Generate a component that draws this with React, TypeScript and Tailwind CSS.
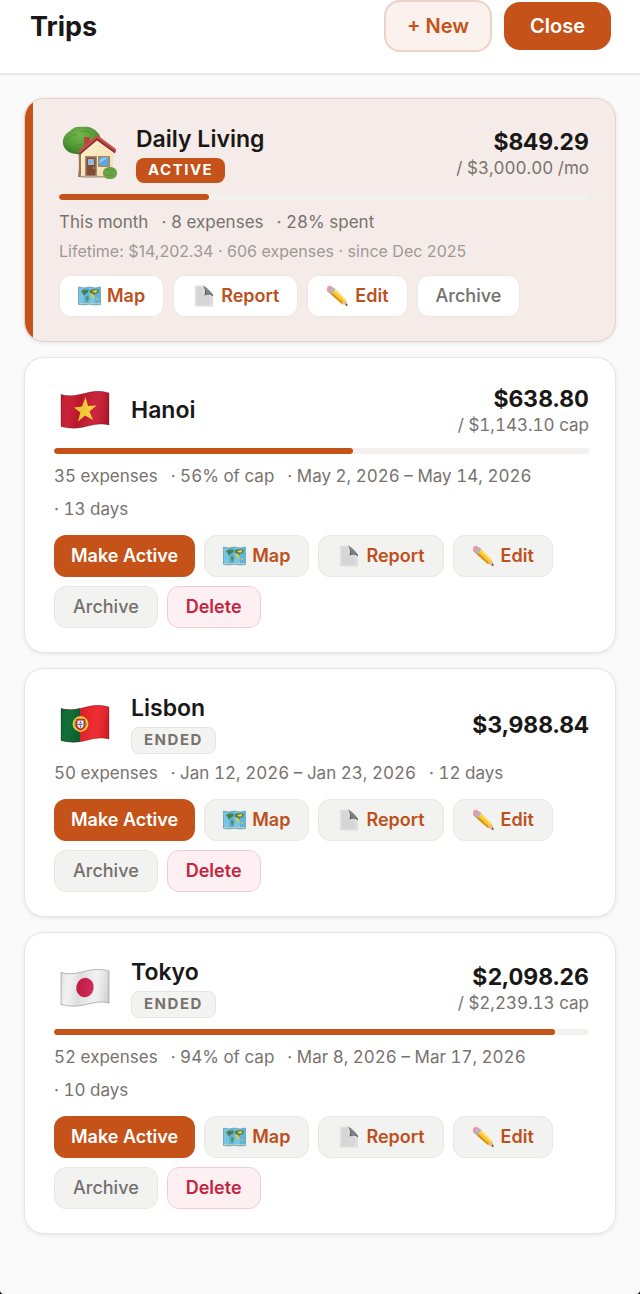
import React from "react";

type Trip = {
  name: string;
  icon: React.ReactNode;
  status?: "ACTIVE" | "ENDED";
  amount: string;
  limit?: string;
  progress?: number;
  meta: string[];
  lifetime?: string;
};

function House() {
  return (
    <svg viewBox="0 0 56 56" className="h-14 w-14" aria-hidden="true">
      <defs>
        <radialGradient id="leaf" cx="45%" cy="30%" r="70%">
          <stop offset="0" stopColor="#74b54a" />
          <stop offset="0.6" stopColor="#559a38" />
          <stop offset="1" stopColor="#3a7a2a" />
        </radialGradient>
        <linearGradient id="wall" x1="0" y1="0" x2="1" y2="1">
          <stop offset="0" stopColor="#fff0cb" />
          <stop offset="1" stopColor="#f3dcae" />
        </linearGradient>
      </defs>
      <path d="M16 24h6l-1 28h-5c1.500-10 1-19 0-28z" fill="#9a7654" />
      <path d="M1 19C0 13 4 8 8 6c3-4 8-5 12-4 6-1 12 1 15 5 4 3 5 9 1 13-3 3-6 4-9 5-3 4-8 5-12 4-7 0-13-4-14-10z" fill="url(#leaf)" />
      <path d="M6 14c3-4 7-5 10-4M12 22c4-3 9-3 12 0M20 7c4-2 8 0 10 3M5 21c2 2 4 3 6 2" fill="none" stroke="#3f7a2c" strokeWidth="1" opacity=".45" />
      <path d="M22 12h6v10h-6z" fill="#b8443a" />
      <path d="M19 29 35 14l16 14v24H19z" fill="url(#wall)" />
      <path d="M19 51h32v1.500H19z" fill="#ad9c81" />
      <path d="M17 27 35 11l19 14-1 3.500-18-13-17 14z" fill="#8f2d30" />
      <path d="m16 26.500 19-16.500 19 14-1 2L35 13 18 28z" fill="#c9504a" />
      <path d="M23 31h12v20H23z" fill="#a98a68" />
      <path d="M24.500 32.500h9V51h-9z" fill="#854a36" />
      <path d="M26 34h6v6h-6z" fill="#8ebbe0" />
      <circle cx="31.800" cy="43" r=".8" fill="#e7c26d" />
      <path d="M22 50.500h14v2H22z" fill="#b6aa9a" />
      <path d="M36 31h12v11H36z" fill="#a38a6d" />
      <path d="M37.500 32.500h9v8h-9z" fill="#58a9de" />
      <path d="M37.500 35.500 41 32.500h5l-8.500 6z" fill="#8dcaee" />
      <path d="M41 48c0-4 3-6 7-6s7 2 7 6-3 6-7 6-7-2-7-6z" fill="#68a344" />
      <path d="M44 46c2-2 5-2 7 0M44 50c2 1 5 1 7-1" fill="none" stroke="#477e2d" opacity=".4" />
    </svg>
  );
}

type FlagKind = "vietnam" | "portugal" | "japan";

function Flag({ kind }: { kind: FlagKind }) {
  const outline = "M1 3.500C11 6 18 4 26 2S41-.5 49 2v32c-8-2-15-.5-23 1.500S11 38 1 35.500z";
  return (
    <svg viewBox="0 0 50 38" className="h-[38px] w-[50px]" aria-hidden="true">
      <defs>
        <clipPath id={kind + "-shape"}>
          <path d={outline} />
        </clipPath>
        <linearGradient id={kind + "-fold"} x1="0" x2="1" y1="0" y2=".1">
          <stop offset="0" stopColor="#000" stopOpacity=".12" />
          <stop offset=".2" stopColor="#fff" stopOpacity=".04" />
          <stop offset=".42" stopColor="#000" stopOpacity=".08" />
          <stop offset=".75" stopColor="#fff" stopOpacity=".06" />
          <stop offset="1" stopColor="#000" stopOpacity=".12" />
        </linearGradient>
      </defs>
      <g clipPath={"url(#" + kind + "-shape)"}>
        {kind === "vietnam" && (
          <>
            <path d="M0 0h50v38H0z" fill="#c8182f" />
            <path d="m25.500 6 2.500 9 8.500-.5-7 6 3.500 8.500-8-4.500-7 6 2.300-9-6.300-5 8-1z" fill="#ffd238" />
          </>
        )}
        {kind === "portugal" && (
          <>
            <path d="M0 0h50v38H0z" fill="#ed2028" />
            <path d="M0 0h20v38H0z" fill="#08672f" />
            <circle cx="20.500" cy="19" r="7" fill="#8c8a2c" stroke="#f4d238" strokeWidth="1.800" />
            <path d="M14 16c4-3 9-3 13 0M14 22c4 3 9 3 13 0M20.500 11v16" stroke="#f4d238" strokeWidth="1" fill="none" />
            <path d="M16 14h9v6.500c0 3-2 4-4.500 5-2.500-1-4.500-2-4.500-5z" fill="#d92737" />
            <path d="M17.500 15.500h6v4.500c0 2-1 2.700-3 3.500-2-.8-3-1.500-3-3.500z" fill="#fff" />
            <path d="M20.500 16.500v6M18.500 19.300h4" stroke="#3158a8" strokeWidth="1.300" strokeDasharray="1.500 .7" />
          </>
        )}
        {kind === "japan" && (
          <>
            <path d="M0 0h50v38H0z" fill="#f0f0f1" />
            <ellipse cx="25" cy="18.500" rx="8.700" ry="9.700" transform="rotate(12 25 18.500)" fill="#cf1f4d" />
          </>
        )}
        <path d="M0 0h50v38H0z" fill={"url(#" + kind + "-fold)"} />
      </g>
      <path d={outline} fill="none" stroke="#000" strokeOpacity=".25" strokeWidth="1" />
    </svg>
  );
}

function MapIcon() {
  return (
    <svg viewBox="0 0 23 20" className="h-5 w-[23px]" aria-hidden="true">
      <path d="M.5 1 6 2l5.500-1L17 2l5.500-1v17.500L17 19l-5.500-.8L6 19l-5.500-.7z" fill="#5bb5dd" />
      <path d="M.5 1 6 2v17l-5.500-.7zM11.500 1 17 2v17l-5.500-.8z" fill="#8bd1eb" opacity=".6" />
      <path d="m3 5 3-1.500 5 .5-1.500 3L7 8l-.5 2L5 8z" fill="#4d7a4a" />
      <path d="m8 10 3 1-.5 2.500L9 16l-1-3z" fill="#5e8f4a" />
      <path d="m12 4 4-1 5 1-1 3-3 1-1 2-1-2-3-1z" fill="#557b3c" />
      <path d="m11.500 8 3-.5 2 2.500-1.500 3-1.500-3z" fill="#dcc64a" />
      <path d="m14 5 4-1 1.500 1.500L17 7z" fill="#f1cf45" />
      <path d="M18 12h2.500v1.500H18z" fill="#cdbb52" />
      <path d="M1 17.500 6 18l5.500-.8L17 18l5-.5" stroke="#d7d3b4" strokeWidth="1" fill="none" />
      <path d="M.5 1 6 2l5.500-1L17 2l5.500-1v17.500L17 19l-5.500-.8L6 19l-5.500-.7z" fill="none" stroke="#628c9b" strokeWidth=".6" />
    </svg>
  );
}

function ReportIcon() {
  return (
    <svg viewBox="0 0 23 22" className="h-[22px] w-[23px]" aria-hidden="true">
      <path d="M3 .5h8l10 10v11H3z" fill="#dedede" />
      <path d="M5 3h6M5 5h6M5 7h6M5 9h6M5 11h12M5 13h13M5 15h13M5 17h13M5 19h12" stroke="#c3c3c3" strokeWidth=".6" />
      <path d="M11 .5c2 2 2.500 6 1.500 10 3-1.500 6-1.500 8.500 1v-1.500z" fill="#4b5053" />
      <path d="M11 .5c4 2 8 6 10 9.500-3-1.500-5-1.500-7.500 0 .5-3 0-6.500-2.500-9.500z" fill="#7b8083" />
    </svg>
  );
}

function PencilIcon() {
  return (
    <svg viewBox="0 0 23 22" className="h-[22px] w-[23px]" aria-hidden="true">
      <path d="M1 3.500C1 1.500 3 .5 5 1l2.500 2-4.500 5-2-2z" fill="#e59aaa" />
      <path d="m3 7.500 4.500-5 2 2L5 9.500z" fill="#8d9da5" />
      <path d="m4 6.500 3.500-3M5 8l3.500-4" stroke="#d6e0e2" strokeWidth=".7" />
      <path d="m5 9.500 4.500-5L20 15l-4 4z" fill="#f8c52c" />
      <path d="m6.500 8 10.700 10L16 19 5 9.500z" fill="#d88b17" />
      <path d="m8 5.500 11 10.500 1-1L9.500 4.500z" fill="#ffe16a" />
      <path d="m16 19 4-4 1.500 6z" fill="#e7b889" />
      <path d="m19.500 20.200 1.500-2 .5 2.800z" fill="#373331" />
    </svg>
  );
}

const trips: Trip[] = [
  {
    name: "Daily Living",
    icon: <House />,
    status: "ACTIVE",
    amount: "$849.29",
    limit: "/ $3,000.00 /mo",
    progress: 28.3,
    meta: ["This month", "· 8 expenses", "· 28% spent"],
    lifetime: "Lifetime: $14,202.34 · 606 expenses · since Dec 2025",
  },
  {
    name: "Hanoi",
    icon: <Flag kind="vietnam" />,
    amount: "$638.80",
    limit: "/ $1,143.10 cap",
    progress: 55.9,
    meta: ["35 expenses", "· 56% of cap", "· May 2, 2026 – May 14, 2026", "· 13 days"],
  },
  {
    name: "Lisbon",
    icon: <Flag kind="portugal" />,
    status: "ENDED",
    amount: "$3,988.84",
    meta: ["50 expenses", "· Jan 12, 2026 – Jan 23, 2026", "· 12 days"],
  },
  {
    name: "Tokyo",
    icon: <Flag kind="japan" />,
    status: "ENDED",
    amount: "$2,098.26",
    limit: "/ $2,239.13 cap",
    progress: 93.7,
    meta: ["52 expenses", "· 94% of cap", "· Mar 8, 2026 – Mar 17, 2026", "· 10 days"],
  },
];

function TripCard({ trip }: { trip: Trip }) {
  const active = trip.status === "ACTIVE";
  const action =
    "flex h-[42px] items-center gap-1.5 rounded-xl border px-[18px] text-lg whitespace-nowrap " +
    (active ? "border-[#ece7e4] bg-white" : "border-[#e7e7e5] bg-[#f2f2f0]");
  return (
    <article
      className={
        "flex overflow-hidden rounded-[20px] border shadow-[0_1px_4px_rgba(0,0,0,0.09)] " +
        (active ? "border-[#e9cfc5] bg-[#f5ece9]" : "border-[#e6e6e6] bg-white")
      }
    >
      {active && <div className="w-2 shrink-0 bg-[#c55218]" />}
      <div className={"min-w-0 flex-1 py-6 pr-[26px] " + (active ? "pl-[26px]" : "pl-[29px]")}>
        <div className="flex items-center">
          <div className={"flex w-[62px] shrink-0 items-center justify-center " + (active ? "h-[60px]" : "h-[55px]")}>
            {trip.icon}
          </div>
          <div className="ml-[15px] flex min-w-0 flex-1 flex-col items-start gap-1">
            <h2 className="text-[23px] leading-[30px] font-semibold text-[#1a1816]">{trip.name}</h2>
            {active && (
              <span className="flex h-[25px] items-center rounded-lg bg-[#c55218] px-3 text-[15px] font-bold tracking-widest text-white">
                ACTIVE
              </span>
            )}
            {trip.status === "ENDED" && (
              <span className="flex h-[27px] items-center rounded-lg border border-[#e5e5e2] bg-[#f3f3f1] px-3 text-[15px] font-bold tracking-widest text-[#77736e]">
                ENDED
              </span>
            )}
          </div>
          <div className="shrink-0 pt-0.5 text-right tabular-nums">
            <div className="text-[23px] leading-7 font-bold text-[#1a1816]">{trip.amount}</div>
            {trip.limit && <div className="text-[17px] leading-6 text-[#77726e]">{trip.limit}</div>}
          </div>
        </div>
        {trip.progress !== undefined && (
          <div
            role="progressbar"
            aria-label={trip.name + " budget"}
            aria-valuenow={Math.round(trip.progress)}
            aria-valuemin={0}
            aria-valuemax={100}
            className="mt-[11px] h-1.5 overflow-hidden rounded-full bg-[#f2f1ef]"
          >
            <div className="h-full rounded-full bg-[#c55218]" style={{ width: trip.progress + "%" }} />
          </div>
        )}
        <div
          className={
            "flex flex-wrap gap-x-[13px] gap-y-2 text-[17px] leading-[25px] text-[#77726e] tabular-nums " +
            (trip.progress === undefined ? "mt-[7px]" : "mt-2.5")
          }
        >
          {trip.meta.map((item) => (
            <span key={item}>{item}</span>
          ))}
        </div>
        {trip.lifetime && <p className="mt-[5px] text-base leading-[22px] text-[#9f9895]">{trip.lifetime}</p>}
        <div className="mt-[13px] flex flex-wrap gap-[9px]">
          {!active && (
            <button type="button" className="h-[42px] rounded-xl bg-[#c55218] px-[17px] text-lg font-semibold text-white">
              Make Active
            </button>
          )}
          <button type="button" className={action + " font-semibold text-[#bd501c]"}>
            <MapIcon />
            Map
          </button>
          <button type="button" className={action + " font-semibold text-[#bd501c]"}>
            <ReportIcon />
            Report
          </button>
          <button type="button" className={action + " font-semibold text-[#bd501c]"}>
            <PencilIcon />
            Edit
          </button>
          <button type="button" className={action + " font-medium text-[#73706d]"}>
            Archive
          </button>
          {!active && (
            <button
              type="button"
              className="h-[42px] rounded-xl border border-[#f0ccd4] bg-[#fef0f2] px-[18px] text-lg font-semibold text-[#c32440]"
            >
              Delete
            </button>
          )}
        </div>
      </div>
    </article>
  );
}

export default function App() {
  return (
    <div className="bg-black">
      <div className="min-h-screen rounded-b-[4px] bg-[#fafafa] font-['Inter',sans-serif]">
        <header className="flex items-start justify-between border-b-2 border-[#e9e9e8] bg-white pr-[29px] pb-[21px] pl-[30px]">
          <h1 className="pt-[9px] text-[27px] leading-9 font-bold text-[#1a1816]">Trips</h1>
          <div className="flex items-center gap-3">
            <button
              type="button"
              className="h-[52px] rounded-2xl border-2 border-[#ecd3ca] bg-[#fbf1ed] px-[21px] text-xl font-semibold text-[#c55218]"
            >
              + New
            </button>
            <button type="button" className="h-12 rounded-2xl bg-[#c55218] px-[26px] text-xl font-semibold text-white">
              Close
            </button>
          </div>
        </header>
        <main className="flex flex-col gap-[15px] px-6 pt-[23px] pb-[58px]">
          {trips.map((trip) => (
            <TripCard key={trip.name} trip={trip} />
          ))}
        </main>
      </div>
    </div>
  );
}
